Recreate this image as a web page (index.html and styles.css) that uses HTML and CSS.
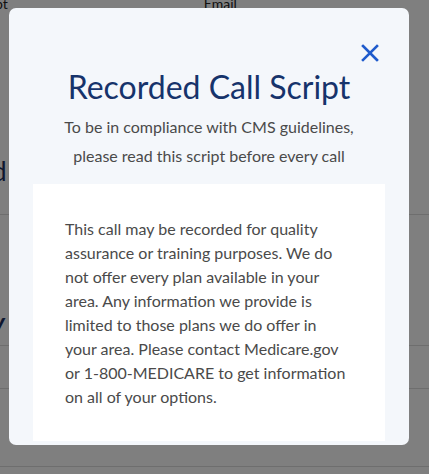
FILE: index.html
```html
<!DOCTYPE html>
<html>
<head>
<meta charset="utf-8">
<link rel="stylesheet" href="styles.css">
</head>
<body>
<div class="page">
  <div class="labels">
    <span class="lbl lbl-a">pt</span>
    <span class="lbl lbl-b">Email</span>
  </div>
  <div class="row row-1"><span class="big">d</span></div>
  <div class="row row-2"><span class="big">y</span></div>
  <div class="row row-3"></div>
  <div class="row row-4"></div>
</div>
<div class="overlay"></div>
<div class="modal">
  <div class="close-row">
    <button class="close" aria-label="Close">
      <svg width="18" height="18" viewBox="0 0 18 18"><path d="M2 2 L16 16 M16 2 L2 16" stroke="#1f5bcc" stroke-width="2.6" stroke-linecap="square" fill="none"/></svg>
    </button>
  </div>
  <h1 class="title">Recorded Call Script</h1>
  <p class="subtitle">To be in compliance with CMS guidelines,<br>please read this script before every call</p>
  <div class="script-box">
    <p class="script">This call may be recorded for quality assurance or training purposes. We do not offer every plan available in your area. Any information we provide is limited to those plans we do offer in your area. Please contact Medicare.gov or <span class="nowrap">1-800-MEDICARE</span> to get information on all of your options.</p>
  </div>
</div>
</body>
</html>
```
FILE: styles.css
```css
html, body {
  margin: 0;
  padding: 0;
  width: 429px;
  height: 474px;
  overflow: hidden;
  font-family: "Lato", "Liberation Sans", sans-serif;
}
body {
  background: #ffffff;
  position: relative;
}
.page {
  width: 429px;
  height: 474px;
}
.labels {
  display: flex;
  height: 20px;
  font-size: 14px;
  color: #222;
}
.lbl {
  line-height: 14px;
  margin-top: -3px;
}
.lbl-a { margin-left: -5px; }
.lbl-b { margin-left: 196px; }
.row {
  border-bottom: 1px solid #dcdcdc;
  position: relative;
}
.row-1 { height: 194px; display: flex; align-items: flex-end; }
.row-2 { height: 130px; display: flex; align-items: flex-end; }
.row-3 { height: 42px; }
.row-4 { height: 77px; }
.big {
  font-size: 26px;
  color: #1b2f5e;
  margin-left: -8px;
  line-height: 26px;
}
.row-1 .big { margin-bottom: 30px; }
.row-2 .big { margin-bottom: 10px; font-style: italic; font-weight: bold; }
.overlay {
  position: absolute;
  inset: 0;
  background: rgba(0, 0, 0, 0.5);
}
.modal {
  position: absolute;
  left: 9px;
  top: 8px;
  width: 400px;
  height: 437px;
  box-sizing: border-box;
  background: #f4f7fb;
  border-radius: 7px;
  padding: 0 24px 4px;
  display: flex;
  flex-direction: column;
}
.close-row {
  display: flex;
  justify-content: flex-end;
  padding-top: 36px;
  padding-right: 6px;
}
.close {
  width: 18px;
  height: 18px;
  padding: 0;
  border: 0;
  background: none;
  display: block;
}
.close svg { display: block; }
.title {
  margin: 5px 0 0;
  text-align: center;
  font-weight: 400;
  font-size: 32px;
  line-height: 40px;
  color: #16336b;
}
.subtitle {
  margin: 5px 0 0;
  text-align: center;
  font-size: 16px;
  line-height: 29px;
  color: #4a4a4a;
}
.script-box {
  margin-top: 14px;
  background: #ffffff;
  flex: 1;
  padding: 33px 34px 0 32px;
}
.script {
  margin: 0;
  font-size: 16px;
  line-height: 24px;
  color: #4a4a4a;
}
.nowrap { white-space: nowrap; }
```
